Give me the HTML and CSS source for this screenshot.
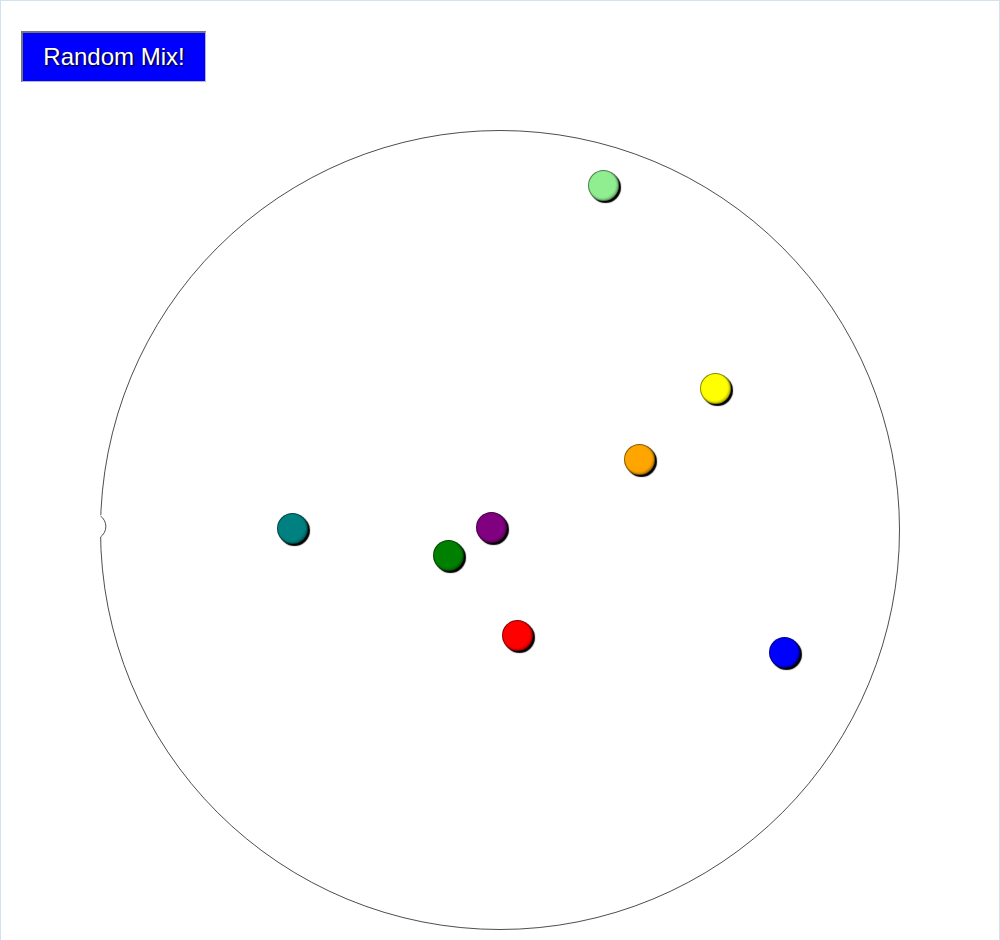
FILE: index.html
```html
<!DOCTYPE html>
<html>
<head>
<meta charset="utf-8">
<link rel="stylesheet" href="styles.css">
</head>
<body>
<div class="page">
  <div class="toolbar">
    <button class="mix-btn">Random Mix!</button>
  </div>
  <div class="arena">
    <svg class="ring" width="800" height="800" viewBox="0 0 800 800">
      <circle cx="400" cy="400" r="399.5" fill="none" stroke="#000" stroke-width="0.7"/>
      <rect x="-2" y="385" width="6" height="22" fill="#fff"/>
      <path d="M0.5,386 A13 13 0 0 1 0.5,407" fill="none" stroke="#222" stroke-width="0.8"/>
    </svg>
    <div class="ball" style="left:488px;top:40px;background:#90ee90"></div>
    <div class="ball" style="left:600px;top:243px;background:#ffff00"></div>
    <div class="ball" style="left:524px;top:314px;background:#ffa500"></div>
    <div class="ball" style="left:177px;top:383px;background:#008080"></div>
    <div class="ball" style="left:376px;top:382px;background:#800080"></div>
    <div class="ball" style="left:333px;top:410px;background:#008000"></div>
    <div class="ball" style="left:402px;top:490px;background:#ff0000"></div>
    <div class="ball" style="left:669px;top:507px;background:#0000ff"></div>
  </div>
</div>
</body>
</html>
```
FILE: styles.css
```css
html, body {
  margin: 0;
  padding: 0;
  background: #fff;
  overflow: hidden;
}
.page {
  border: 1px solid #d2e2ee;
  height: 980px;
  box-sizing: border-box;
  font-family: "Liberation Sans", Arial, sans-serif;
}
.toolbar {
  padding: 30px 20px 0;
}
.mix-btn {
  display: block;
  width: 185px;
  height: 51px;
  margin: 0;
  padding: 0;
  background: #0000ff;
  color: #fff;
  font-family: "Liberation Sans", Arial, sans-serif;
  font-size: 24px;
  text-shadow: 1px 1px 2px #000;
  border-style: solid;
  border-width: 2px 1px 1px 2px;
  border-color: #767676 #b4b4e0 #b4b4e0 #767676;
  box-sizing: border-box;
}
.arena {
  position: relative;
  width: 800px;
  height: 800px;
  margin: 48px 0 0 99px;
}
.ring {
  display: block;
}
.ball {
  position: absolute;
  width: 31px;
  height: 31px;
  border-radius: 50%;
  box-sizing: border-box;
  border: 1px solid rgba(0, 0, 0, 0.45);
  box-shadow: 2px 2px 1px #000, inset -1px -1px 2px rgba(0, 0, 0, 0.25);
}
```
